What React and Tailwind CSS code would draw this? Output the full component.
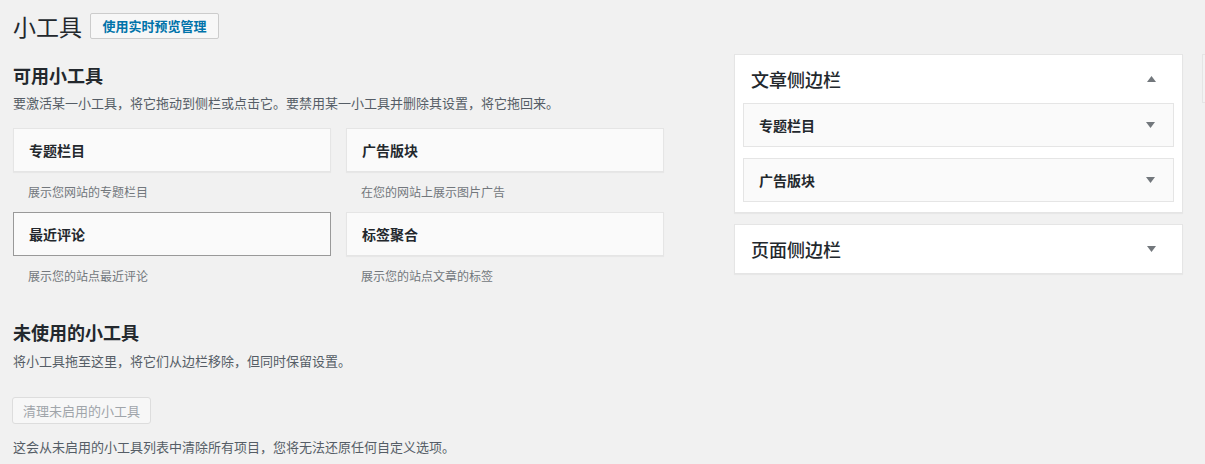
import React from 'react';

const font = { fontFamily: '"Noto Sans CJK SC", "Noto Sans", sans-serif' };

const available = [
  { title: '专题栏目', desc: '展示您网站的专题栏目' },
  { title: '广告版块', desc: '在您的网站上展示图片广告' },
  { title: '最近评论', desc: '展示您的站点最近评论', active: true },
  { title: '标签聚合', desc: '展示您的站点文章的标签' },
];

function Caret({ up }) {
  return (
    <svg width="9" height="6" viewBox="0 0 9 6" className="shrink-0">
      {up ? (
        <polygon points="0,6 9,6 4.5,0" fill="#72777c" />
      ) : (
        <polygon points="0,0 9,0 4.5,6" fill="#72777c" />
      )}
    </svg>
  );
}

function WidgetCard({ title, desc, active }) {
  return (
    <div>
      <div
        className={
          'h-[44px] flex items-center pl-[15px] bg-[#fafafa] border ' +
          (active ? 'border-[#999]' : 'border-[#e5e5e5] shadow-[0_1px_1px_rgba(0,0,0,0.04)]')
        }
      >
        <span className="text-[14px] font-semibold text-[#23282d]">{title}</span>
      </div>
      <div className="h-[40px] flex items-center pl-[15px] text-[12px] text-[#72777c]">{desc}</div>
    </div>
  );
}

function SidebarWidget({ title }) {
  return (
    <div className="h-[44px] flex items-center justify-between pl-[15px] pr-[18px] bg-[#fafafa] border border-[#e5e5e5]">
      <span className="text-[14px] font-semibold text-[#23282d]">{title}</span>
      <Caret />
    </div>
  );
}

export default function App() {
  return (
    <div className="min-h-screen w-[1205px] overflow-hidden bg-[#f1f1f1] text-[#23282d]" style={font}>
      {/* page title */}
      <div className="pl-[13px] pt-[13px] flex items-center gap-[8px]">
        <h1 className="text-[23px] leading-[26px] font-normal text-[#23282d]">小工具</h1>
        <button className="h-[26px] w-[129px] flex items-center justify-center border border-[#ccc] bg-[#f7f7f7] rounded-[2px] text-[13px] font-semibold text-[#0073aa]">
          使用实时预览管理
        </button>
      </div>

      <div className="flex mt-[15px] pl-[13px]">
        {/* left column */}
        <div className="w-[651px] shrink-0">
          <h2 className="mt-[9px] text-[18px] leading-[24px] font-semibold">可用小工具</h2>
          <p className="mt-[6px] text-[13px] leading-[20px] text-[#555d66]">
            要激活某一小工具，将它拖动到侧栏或点击它。要禁用某一小工具并删除其设置，将它拖回来。
          </p>
          <div className="mt-[15px] grid grid-cols-2 gap-x-[15px]">
            {available.map((w) => (
              <WidgetCard key={w.title} {...w} />
            ))}
          </div>

          <h2 className="mt-[24px] text-[18px] leading-[24px] font-semibold">未使用的小工具</h2>
          <p className="mt-[7px] text-[13px] leading-[20px] text-[#555d66]">
            将小工具拖至这里，将它们从边栏移除，但同时保留设置。
          </p>
          <button className="mt-[26px] -ml-[1px] h-[27px] w-[139px] flex items-center justify-center border border-[#ddd] bg-[#f7f7f7] rounded-[3px] text-[13px] text-[#a0a5aa]">
            清理未启用的小工具
          </button>
          <p className="mt-[13px] text-[13px] leading-[20px] text-[#555d66]">
            这会从未启用的小工具列表中清除所有项目，您将无法还原任何自定义选项。
          </p>
        </div>

        {/* sidebars */}
        <div className="ml-[70px] w-[449px] shrink-0">
          <div className="bg-white border border-[#e5e5e5] shadow-[0_1px_1px_rgba(0,0,0,0.04)] pb-[10px]">
            <div className="h-[48px] flex items-center justify-between pl-[16px] pr-[26px]">
              <span className="text-[18px] font-medium">文章侧边栏</span>
              <Caret up />
            </div>
            <div className="px-[8px] flex flex-col gap-[11px]">
              <SidebarWidget title="专题栏目" />
              <SidebarWidget title="广告版块" />
            </div>
          </div>
          <div className="mt-[11px] bg-white border border-[#e5e5e5] shadow-[0_1px_1px_rgba(0,0,0,0.04)]">
            <div className="h-[48px] flex items-center justify-between pl-[16px] pr-[26px]">
              <span className="text-[18px] font-medium">页面侧边栏</span>
              <Caret />
            </div>
          </div>
        </div>

        <div className="ml-[19px] w-[449px] shrink-0">
          <div className="h-[49px] border border-[#e5e5e5] bg-[#f3f3f3]" />
        </div>
      </div>
    </div>
  );
}
